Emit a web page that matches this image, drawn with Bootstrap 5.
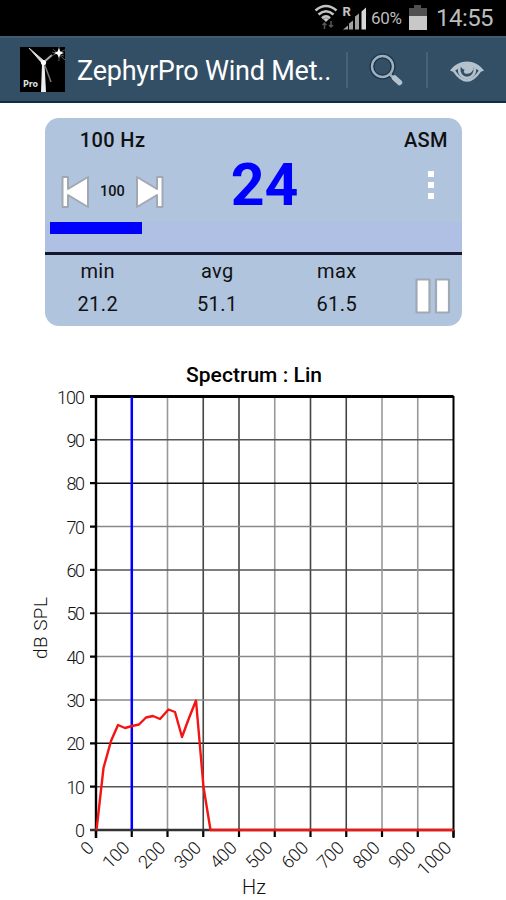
<!DOCTYPE html>
<html lang="en">
<head>
<meta charset="utf-8">
<meta name="viewport" content="width=device-width, initial-scale=1">
<title>ZephyrPro Wind Meter</title>
<link rel="stylesheet" href="https://cdn.jsdelivr.net/npm/bootstrap@5.3.0/dist/css/bootstrap.min.css">
<style>
body{font-family:Roboto,"Liberation Sans",sans-serif;background:#fff;color:#111;overflow:hidden}
svg{display:block;flex:none}
.statusbar{height:36px;background:#000;color:#bcbcbc;padding-right:14px}
.pct{font-size:17px;width:31px;margin:0 7px 0 4px;line-height:1;letter-spacing:-.3px}
.clock{font-size:24px;width:56px;line-height:1;letter-spacing:-.55px;white-space:nowrap;margin-left:9px}
.appbar{height:67px;background:#334f65;border-top:2px solid #405c72;border-bottom:2px solid #102c42;padding-left:20px}
.app-title{font-size:27px;line-height:1;color:#fff;width:269px;margin:3px 0 0 12px;white-space:nowrap;letter-spacing:-.22px}
.sep{width:2px;height:36px;background:#486175}
.meter{width:417px;height:208px;margin:15px 0 0 45px;border-radius:14px;background:#b0c4de;overflow:hidden}
.upper{height:104px}
.side{width:135px}
.label{font-size:20px;line-height:24px;font-weight:500;letter-spacing:.4px;padding-top:10px}
.asm{margin-right:14px}
.skip-row{margin:23px 16px 0}
.mini{font-size:14.500px;font-weight:500;line-height:1;width:25px}
.big{font-size:59px;line-height:60px;font-weight:700;color:#00f;margin:37px 0 0 22px}
.dots{margin:18px 27px 0 0}
.band{height:30px;background:#b0c0e5;padding-left:5px}
.level{height:12px;background:#00f}
.rule{height:3px;background:#14182c}
.stats{margin-left:-7px}
.stat{width:119.5px;font-size:20px;letter-spacing:.4px}
.stat div{line-height:33px}
.pause{margin:23px 0 0 18px}
.chart text{font-family:Roboto,"Liberation Sans",sans-serif}
</style>
<script src="https://cdn.jsdelivr.net/npm/bootstrap@5.3.0/dist/js/bootstrap.bundle.min.js"></script>
</head>
<body>
<header>
<div class="statusbar d-flex align-items-center justify-content-end">
 <svg width="53" height="36" viewBox="317 0 53 36">
  <g fill="none" stroke="#c4c4c4" stroke-width="2.600"><path d="M318.500 10.500Q329 1.500 339.500 10.500"/><path d="M321.500 14.500Q329 8 336.500 14.500"/><path d="M325 18.200Q329 14.700 333 18.200"/></g>
  <path d="M329 22l-3-3q3-2 6 0z" fill="#c4c4c4"/>
  <path d="M327.500 29v-6M325.500 25l2-2 2 2M334 21v6M332 25l2 2 2-2" stroke="#555" stroke-width="1.500" fill="none"/>
  <text x="345.500" y="16" font-size="13" font-weight="700" fill="#c4c4c4">R</text>
  <path d="M346 29.500l5-4v4zM352 23.500l4-3v9h-4zM358 16.500l4-3v16h-4z" fill="#a0a0a0"/><path d="M364.500 11.500l4.500-4v22h-4.500z" fill="#d8d8d8"/>
 </svg>
 <span class="pct">60%</span>
 <svg width="18" height="36" viewBox="0 0 18 36"><path d="M5 5h7v3h6v9H0V8h5z" fill="#505050"/><path d="M0 16h18v14H0z" fill="#c8c8c8"/></svg>
 <span class="clock">14:55</span>
</div>
<nav class="appbar d-flex align-items-center">
 <svg width="45" height="45" viewBox="0 0 45 45">
  <path d="M0 0h45v45H0z"/>
  <path d="M22 17h2.500l1.500 28h-5z" fill="#eee"/><path d="M9 1l15 13-2 2z" fill="#ddd" stroke="#ddd"/><path d="M24 15l8-7" stroke="#aaa" stroke-width="2"/><path d="M24 16l7 19" stroke="#777" stroke-width="1.500"/>
  <circle cx="23.500" cy="15.500" r="2.600" fill="#fff"/>
  <path d="M31 9l14-6M33 2l12 11M39 0v14M32 5l12 4" stroke="#756b73" stroke-width=".8"/><path d="M39 1l1.200 3.500L44 6l-3.800 1.500L39 11l-1.500-3.500L34 6l3.500-1.500z" fill="#fff"/>
  <text x="3" y="40" font-size="8" font-weight="700" font-family="DejaVu Sans" fill="#ddd" textLength="15">Pro</text>
 </svg>
 <span class="app-title">ZephyrPro Wind Met..</span>
 <span class="sep"></span>
 <svg width="78" height="44" viewBox="348 47 78 44">
  <g fill="none" stroke="#18334a" stroke-width="5"><circle cx="382.500" cy="65.500" r="10.500"/><path d="M390.500 74l4 4"/></g>
  <circle cx="382.500" cy="65.500" r="10.500" fill="none" stroke="#9fb0bd" stroke-width="2.400"/><path d="M390 73.500l3 3" stroke="#9fb0bd" stroke-width="2.500"/><path d="M394.500 77l5 4.500" stroke="#b4c2cd" stroke-width="5.500" stroke-linecap="round"/>
 </svg>
 <span class="sep"></span>
 <svg width="78" height="44" viewBox="428 47 78 44">
  <path d="M450 69.500C459 57.500 475 57.500 484 69.500L480.500 71Q467 59.500 453.500 71z" fill="#b4c2cd"/>
  <path d="M454 70Q467 89 480 70" fill="none" stroke="#b4c2cd" stroke-width="2.300"/>
  <path d="M459.500 67a7.800 7.800 0 1 0 15 0" fill="none" stroke="#b4c2cd" stroke-width="2.500"/><path d="M461 65Q468 60.500 474 65L473 69q-3 5-8 3.500q-2-2-.5-4-2.500 0-3.500-3.500z" fill="#b4c2cd"/>
 </svg>
</nav>
</header>
<main>
<section class="meter">
 <div class="upper d-flex justify-content-between">
  <div class="side">
   <div class="label text-center">100 Hz</div>
   <div class="skip-row d-flex align-items-center justify-content-between">
    <svg width="28" height="34" viewBox="0 0 28 34"><path d="M1.500 2h5.500v12L27 2v30L7 20v12h-5.500z" fill="#fff" stroke="#a0a9b3" stroke-width="2" stroke-linejoin="round"/></svg>
    <span class="mini">100</span>
    <svg width="28" height="34" viewBox="0 0 28 34"><path d="M26.500 2h-5.500v12L1 2v30l20-12v12h5.500z" fill="#fff" stroke="#a0a9b3" stroke-width="2" stroke-linejoin="round"/></svg>
   </div>
  </div>
  <div class="big">24</div>
  <div class="side d-flex flex-column align-items-end">
   <div class="label asm">ASM</div>
   <svg class="dots" width="8" height="32" viewBox="0 0 8 32"><path d="M1 1h6v6H1zM1 12h6v6H1zM1 23h6v6H1z" fill="#fff"/></svg>
  </div>
 </div>
 <div class="band"><div class="level" style="width:92px"></div></div>
 <div class="rule"></div>
 <div class="d-flex">
  <div class="stats d-flex text-center">
   <div class="stat"><div>min</div><div>21.2</div></div>
   <div class="stat"><div>avg</div><div>51.1</div></div>
   <div class="stat"><div>max</div><div>61.5</div></div>
  </div>
  <svg class="pause" width="36" height="36" viewBox="0 0 36 36"><path d="M1.500 1.500h13v33h-13zM21 1.500h13v33h-13z" fill="#fff" stroke="#a0a9b3" stroke-width="2.200" stroke-linejoin="round"/></svg>
 </div>
</section>
<svg class="chart" width="506" height="574" viewBox="0 326 506 574">
 <text x="254" y="382" text-anchor="middle" font-size="21" font-weight="500" textLength="136">Spectrum : Lin</text>
 <g id="grid"></g>
 <g fill="none" stroke="#000">
  <path d="M96 395V838" stroke-width="2.400"/><path d="M90 396.500H453.500" stroke-width="3"/><path d="M453.500 396V838" stroke-width="2"/><path d="M90 830H454" stroke-width="2.400" stroke="#333"/>
 </g>
 <path d="M131.800 397V830" stroke="#00f" stroke-width="2.500"/>
 <path d="M96.500 830L103.500 768L111 741L118 725L125 728L132 726L139 724.500L146 717.500L153 716L160 719L168.500 709.500L175 712L182 737L189 718L196 700.500L203.500 787L210.500 830H453.500" fill="none" stroke="#f51414" stroke-width="2.400" stroke-linejoin="round"/>
 <g id="labels" font-size="18" font-weight="300" fill="#111"></g>
 <text transform="translate(47 628) rotate(-90)" text-anchor="middle" font-size="19" font-weight="300" fill="#111" textLength="62">dB SPL</text>
 <text x="254" y="894" text-anchor="middle" font-size="20" font-weight="300" fill="#111" textLength="24">Hz</text>
</svg>
</main>
<script>
let lines = '', labels = '';
for (let i = 0; i <= 10; i++) {
  const x = 96 + 35.75 * i, y = 830 - 43.35 * i;
  const xGray = [2, 5, 8, 9].includes(i) ? '#999' : '#444';
  const yGray = [3, 4, 7].includes(i) ? '#888' : (i === 2 || i === 8 ? '#111' : '#555');
  if (i > 0 && i < 10) lines += `<path d="M${x} 397V830" stroke="${xGray}" stroke-width="1.6"/><path d="M97 ${y}H453" stroke="${yGray}" stroke-width="1.5"/>`;
  lines += `<path d="M${x} 830v7M90 ${y}h7" stroke="#000" stroke-width="2.2"/>`;
  const n = String(i * 10), m = String(i * 100);
  labels += `<text x="85" y="${y + 7}" text-anchor="end" textLength="${n.length * 9.3}">${n}</text>`;
  labels += `<text transform="translate(${x - 1} 849) rotate(-45)" text-anchor="end" textLength="${m.length * 9.8}">${m}</text>`;
}
document.getElementById('grid').innerHTML = lines;
document.getElementById('labels').innerHTML = labels;
</script>
</body>
</html>
